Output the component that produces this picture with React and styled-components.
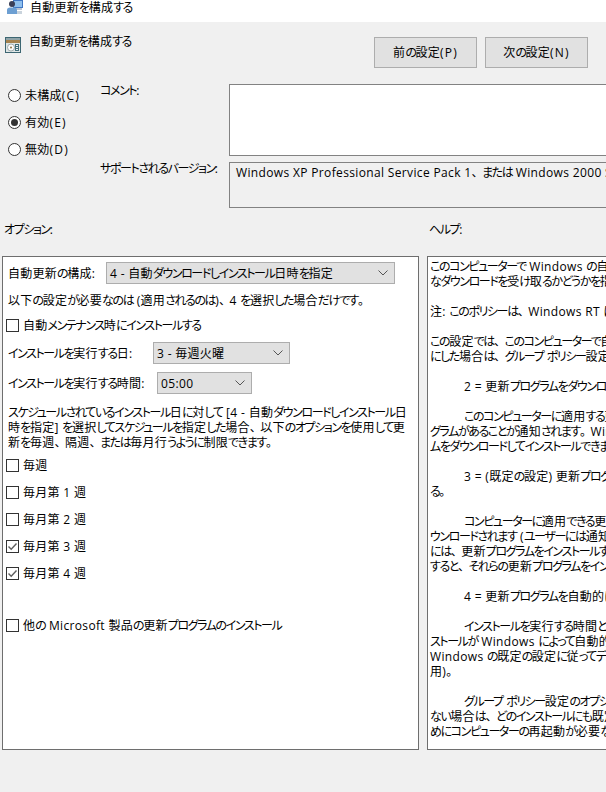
import React from "react";
import styled, { createGlobalStyle } from "styled-components";

const Global = createGlobalStyle`
  html, body { margin: 0; padding: 0; background: #f0f0f0; }
  body {
    font-family: "Open Sans", "Noto Sans CJK JP", sans-serif;
    font-size: 12px;
    line-height: 15px;
    color: #000;
    font-feature-settings: "palt";
  }
`;

const Latin = styled.span`
  letter-spacing: 0.35px;
`;
const AccessKey = styled.span`
  letter-spacing: 1.2px;
`;
const Kana = styled.span`
  letter-spacing: -1.4px;
`;
const Kanji = styled.span`
  letter-spacing: 0.25px;
`;
const Punct = styled.span`
  font-feature-settings: normal;
  letter-spacing: -1.5px;
`;

/* Splits a string into runs, which have different widths in the reference font. */
const T = ({ children }) =>
  String(children)
    .split(/([\u3040-\u30ff]+|[\u3001\u3002]+|\([A-Z]\)|[\u0020-\u007e]+)/)
    .filter(Boolean)
    .map((run, i) => {
      if (/^\([A-Z]\)$/.test(run)) return <AccessKey key={i}>{run}</AccessKey>;
      if (/^[\u0020-\u007e]/.test(run)) return <Latin key={i}>{run}</Latin>;
      if (/^[\u3040-\u30ff]/.test(run)) return <Kana key={i}>{run}</Kana>;
      if (/^[\u3001\u3002]/.test(run)) return <Punct key={i}>{run}</Punct>;
      return <Kanji key={i}>{run}</Kanji>;
    });

const Window = styled.div`
  width: 606px;
  height: 792px;
  overflow: hidden;
  display: flex;
  flex-direction: column;
`;
const TitleBar = styled.div`
  height: 22px;
  flex: none;
  background: #fff;
  display: flex;
  align-items: flex-start;
  gap: 7px;
  padding-left: 7px;
`;
const Header = styled.div`
  height: 62px;
  flex: none;
  display: flex;
  justify-content: space-between;
  padding: 13px 18px 0 5px;
  box-sizing: border-box;
`;
const HeaderTitle = styled.div`
  display: flex;
  gap: 8px;
  align-items: flex-start;
  height: 16px;
  svg { margin-top: 2px; }
  > span { margin-top: -1px; }
`;
const ButtonGroup = styled.div`
  display: flex;
  gap: 8px;
  margin-top: 2px;
`;
const NavButton = styled.div`
  width: 103px;
  height: 31px;
  box-sizing: border-box;
  background: #e1e1e1;
  border: 1px solid #adadad;
  display: flex;
  align-items: center;
  justify-content: center;
`;
const Settings = styled.div`
  display: flex;
  flex: none;
`;
const RadioColumn = styled.div`
  width: 92px;
  padding: 4px 0 0 8px;
  flex: none;
  display: flex;
  flex-direction: column;
  gap: 12px;
`;
const RadioRow = styled.div`
  display: flex;
  align-items: center;
  gap: 4px;
`;
const Radio = styled.span`
  width: 13px;
  height: 13px;
  box-sizing: border-box;
  border: 1px solid #333;
  border-radius: 50%;
  background: #fff;
  display: flex;
  align-items: center;
  justify-content: center;
  &::after {
    content: "";
    width: 7px;
    height: 7px;
    border-radius: 50%;
    background: ${(p) => (p.$on ? "#333" : "transparent")};
  }
`;
const FieldGrid = styled.div`
  display: grid;
  grid-template-columns: 129px 500px;
  row-gap: 6px;
`;
const FieldLabel = styled.div`
  margin-top: -1px;
  white-space: nowrap;
`;
const CommentBox = styled.div`
  height: 72px;
  box-sizing: border-box;
  background: #fff;
  border: 1px solid #828282;
`;
const SupportBox = styled.div`
  height: 46px;
  box-sizing: border-box;
  border: 1px solid #828282;
  padding: 2px 6px;
  white-space: nowrap;
  overflow: hidden;
`;
const PaneLabels = styled.div`
  display: grid;
  grid-template-columns: 425px 1fr;
  padding: 14px 0 0 4px;
  height: 34px;
  flex: none;
  box-sizing: border-box;
  margin-bottom: 14px;
`;
const Panes = styled.div`
  display: grid;
  grid-template-columns: 417px 400px;
  gap: 8px;
  padding-left: 2px;
  flex: none;
`;
const Pane = styled.div`
  height: 494px;
  box-sizing: border-box;
  background: #fff;
  border: 1px solid #6e6e6e;
  overflow: hidden;
`;
const OptionsPane = styled(Pane)`
  padding: 5px 0 0 5px;
`;
const HelpPane = styled(Pane)`
  padding: 2px 0 0 2px;
  white-space: pre;
`;
const HelpLine = styled.div`
  height: 15px;
  padding-left: ${(p) => (p.$indent ? "34px" : "0")};
`;
const SelectRow = styled.div`
  display: flex;
  align-items: center;
  margin-top: ${(p) => p.$top || 0}px;
`;
const SelectLabel = styled.div`
  width: ${(p) => p.$w}px;
  flex: none;
  white-space: nowrap;
`;
const Select = styled.div`
  width: ${(p) => p.$w}px;
  height: 22px;
  box-sizing: border-box;
  background: #e1e1e1;
  border: 1px solid #adadad;
  padding-left: 3px;
  padding-right: 6px;
  display: flex;
  align-items: center;
  justify-content: space-between;
`;
const Note = styled.div`
  margin-top: ${(p) => p.$top || 0}px;
  white-space: nowrap;
`;
const CheckRow = styled.div`
  display: flex;
  align-items: center;
  gap: 4px;
  height: 15px;
  margin-top: ${(p) => p.$top}px;
  margin-left: -2px;
`;
const Box = styled.span`
  width: 13px;
  height: 13px;
  flex: none;
  box-sizing: border-box;
  border: 1px solid #333;
  background: #fff;
  display: flex;
  align-items: center;
  justify-content: center;
`;

const Chevron = () => (
  <svg width="10" height="6" viewBox="0 0 10 6" fill="none" stroke="#555" strokeWidth="1">
    <path d="M.5.5 5 5 9.5.5" />
  </svg>
);

const Check = ({ label, on, top }) => (
  <CheckRow $top={top}>
    <Box>
      {on && (
        <svg width="11" height="11" viewBox="0 0 11 11" fill="none" stroke="#5f5f5f" strokeWidth="1.4">
          <path d="M1.5 5.5 4.2 8.2 9.5 2.5" />
        </svg>
      )}
    </Box>
    <span><T>{label}</T></span>
  </CheckRow>
);

const TitleIcon = () => (
  <svg width="16" height="14" viewBox="0 0 16 14">
    <rect x="6" y="0" width="10" height="8" fill="#3f76c4" />
    <rect x="7" y="1" width="8" height="6" fill="#8fc0ee" />
    <rect x="8" y="8" width="7" height="2" fill="#b9c4d2" />
    <circle cx="5" cy="4" r="3" fill="#3a3f58" />
    <path d="M0 14V10Q0 7.5 3 7.5H7Q10 7.5 10 10V14Z" fill="#6d9fd2" />
    <path d="M10 11H15V14H10Z" fill="#c9d3dc" />
  </svg>
);

const PolicyIcon = () => (
  <svg width="16" height="16" viewBox="0 0 16 16">
    <rect width="16" height="16" fill="#3d6672" />
    <rect x="1" y="1" width="14" height="2" fill="#8fa3a8" />
    <rect x="1" y="3" width="14" height="3" fill="#a5824f" />
    <rect x="1" y="6" width="14" height="9" fill="#dfe6e6" />
    <circle cx="6" cy="10.5" r="3.5" fill="#fbfbfb" stroke="#6c7c80" strokeWidth=".6" />
    <circle cx="6" cy="10.5" r="1" fill="#8b6f3f" />
    <rect x="10" y="7" width="4" height="7" fill="#44707c" />
    <rect x="11" y="8" width="2" height="1" fill="#f3f3f3" />
    <rect x="11" y="10" width="2" height="1" fill="#f3f3f3" />
    <rect x="11" y="12" width="2" height="1" fill="#f3f3f3" />
  </svg>
);

const helpLines = [
  ["このコンピューターで Windows の自動更新サービスを使用して、セキュリティ更新プログラムやその他の重要"],
  ["なダウンロードを受け取るかどうかを指定します。"],
  [""],
  ["注: このポリシーは、Windows RT には適用されません。"],
  [""],
  ["この設定では、このコンピューターで自動更新を有効にするかどうかを指定できます。サービスを有効"],
  ["にした場合は、グループ ポリシー設定の [オプション] ボックスの 4 つのオプションから"],
  [""],
  ["2 = 更新プログラムをダウンロードする前に通知する", true],
  [""],
  ["このコンピューターに適用する更新プログラムが見つかると、ダウンロードの準備ができた更新プロ", true],
  ["グラムがあることが通知されます。Windows Update に移動すると、利用可能な更新プログラ"],
  ["ムをダウンロードしてインストールできます。"],
  [""],
  ["3 = (既定の設定) 更新プログラムを自動的にダウンロードし、インストールの準備ができたら通知す", true],
  ["る。"],
  [""],
  ["コンピューターに適用できる更新プログラムが見つかると、それらはバックグラウンドでダ", true],
  ["ウンロードされます (ユーザーには通知されず、作業も中断されません)。ダウンロードが完了した場合"],
  ["には、更新プログラムをインストールする準備ができたことが通知されます。Windows Update に移動"],
  ["すると、それらの更新プログラムをインストールできます。"],
  [""],
  ["4 = 更新プログラムを自動的にダウンロードし、インストールする日時を指定", true],
  [""],
  ["インストールを実行する時間としてグループ ポリシー設定のオプションを指定します。", true],
  ["ストールが Windows によって自動的に行われます。スケジュールを指定しない場合は"],
  ["Windows の既定の設定に従ってデバイスのインストールが実行されます (既定は毎日午前 3 時に適"],
  ["用)。"],
  [""],
  ["グループ ポリシー設定のオプションで、スケジュールを指定した場合、または指定し", true],
  ["ない場合は、どのインストールにも既定の設定が適用されます。インストールを完了するた"],
  ["めにコンピューターの再起動が必要な更新プログラムがある場合は、自動的に再起動します。"],
];

export default function App() {
  return (
    <Window>
      <Global />
      <TitleBar>
        <TitleIcon />
        <span><T>自動更新を構成する</T></span>
      </TitleBar>
      <Header>
        <HeaderTitle>
          <PolicyIcon />
          <span><T>自動更新を構成する</T></span>
        </HeaderTitle>
        <ButtonGroup>
          <NavButton><span><T>前の設定(P)</T></span></NavButton>
          <NavButton><span><T>次の設定(N)</T></span></NavButton>
        </ButtonGroup>
      </Header>
      <Settings>
        <RadioColumn>
          <RadioRow><Radio /><span><T>未構成(C)</T></span></RadioRow>
          <RadioRow><Radio $on /><span><T>有効(E)</T></span></RadioRow>
          <RadioRow><Radio /><span><T>無効(D)</T></span></RadioRow>
        </RadioColumn>
        <FieldGrid>
          <FieldLabel><T>コメント:</T></FieldLabel>
          <CommentBox />
          <FieldLabel><T>サポートされるバージョン:</T></FieldLabel>
          <SupportBox><T>Windows XP Professional Service Pack 1、または Windows 2000 Service Pack 3 以降</T></SupportBox>
        </FieldGrid>
      </Settings>
      <PaneLabels>
        <span><T>オプション:</T></span>
        <span><T>ヘルプ:</T></span>
      </PaneLabels>
      <Panes>
        <OptionsPane>
          <SelectRow>
            <SelectLabel $w={98}><T>自動更新の構成:</T></SelectLabel>
            <Select $w={289}>
              <span><T>4 - 自動ダウンロードしインストール日時を指定</T></span>
              <Chevron />
            </Select>
          </SelectRow>
          <Note $top={9}><T>以下の設定が必要なのは (適用されるのは)、4 を選択した場合だけです。</T></Note>
          <Check top={10} label="自動メンテナンス時にインストールする" />
          <SelectRow $top={9}>
            <SelectLabel $w={145}><T>インストールを実行する日:</T></SelectLabel>
            <Select $w={137}>
              <span><T>3 - 毎週火曜</T></span>
              <Chevron />
            </Select>
          </SelectRow>
          <SelectRow $top={8}>
            <SelectLabel $w={149}><T>インストールを実行する時間:</T></SelectLabel>
            <Select $w={95}>
              <span><T>05:00</T></span>
              <Chevron />
            </Select>
          </SelectRow>
          <Note $top={11}>
            <T>スケジュールされているインストール日に対して [4 - 自動ダウンロードしインストール日</T><br />
            <T>時を指定] を選択してスケジュールを指定した場合、以下のオプションを使用して更</T><br />
            <T>新を毎週、隔週、または毎月行うように制限できます。</T>
          </Note>
          <Check top={8} label="毎週" />
          <Check top={12} label="毎月第 1 週" />
          <Check top={12} label="毎月第 2 週" />
          <Check top={12} label="毎月第 3 週" on />
          <Check top={12} label="毎月第 4 週" on />
          <Check top={37} label="他の Microsoft 製品の更新プログラムのインストール" />
        </OptionsPane>
        <HelpPane>
          {helpLines.map(([text, indent], i) => (
            <HelpLine key={i} $indent={indent}><T>{text}</T></HelpLine>
          ))}
        </HelpPane>
      </Panes>
    </Window>
  );
}
